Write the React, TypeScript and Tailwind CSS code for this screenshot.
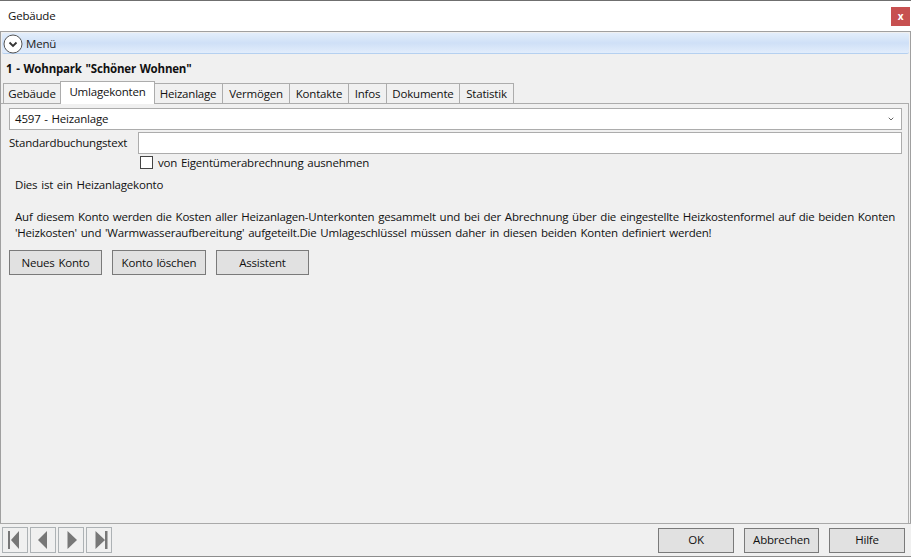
import { ChevronDown } from 'lucide-react';

const tabs = [
  { label: 'Gebäude', width: 'w-[58px]' },
  { label: 'Umlagekonten', width: 'w-[95px]' },
  { label: 'Heizanlage', width: 'w-[69px]' },
  { label: 'Vermögen', width: 'w-[67px]' },
  { label: 'Kontakte', width: 'w-[59px]' },
  { label: 'Infos', width: 'w-[38px]' },
  { label: 'Dokumente', width: 'w-[73px]' },
  { label: 'Statistik', width: 'w-[54px]' },
];

const font = "font-['Open_Sans','Noto_Sans',sans-serif]";

function ActionButton({ label, width }: { label: string; width: string }) {
  return (
    <button className={`${width} h-[25px] bg-[#e1e1e1] border border-[#7a7a7a] text-[11.5px] text-[#111] tracking-[-0.2px] [word-spacing:1px]`}>
      {label}
    </button>
  );
}

function NavButton({ children }: { children: React.ReactNode }) {
  return (
    <button className="w-[26px] h-[26px] border border-[#adb2b5] flex items-center justify-center">
      <svg width="20" height="20" viewBox="0 0 20 20" fill="#777">
        {children}
      </svg>
    </button>
  );
}

export default function App() {
  return (
    <div className={`${font} w-[911px] h-[557px] bg-white flex flex-col border-t border-[#6f6f6f] text-[11.5px] text-[#111] tracking-[-0.2px] [word-spacing:1px] overflow-hidden`}>
      {/* Title bar */}
      <div className="h-[30px] shrink-0 flex items-center justify-between pl-[8px] pr-[1px]">
        <span className="-mt-[1px]">Gebäude</span>
        <div className="w-[19px] h-[19px] bg-[#c75050] text-white text-[10px] font-bold flex items-center justify-center">x</div>
      </div>

      {/* Window body */}
      <div className="flex-1 flex flex-col bg-[#f0f0f0] border-t border-x border-b border-[#a0a0a0] min-h-0">
        <div className="mx-[1px] mt-[1px] h-[21px] shrink-0 flex items-center gap-[3px] pl-[1px] pt-[1px] rounded-[2px] border-b border-[#b5d0f0] bg-gradient-to-b from-[#e3eefb] via-[#cfe0f7] to-[#e2edfc] text-[#222]">
          <svg width="20" height="20" viewBox="0 0 20 20" fill="none">
            <circle cx="10" cy="10" r="9" fill="#fff" stroke="#555" strokeWidth="1" />
            <path d="M6.5 8.5L10 12l3.5-3.5" stroke="#333" strokeWidth="1.8" />
          </svg>
          <span>Menü</span>
        </div>

        <div className="pl-[5px] pt-[4px] h-[26px] shrink-0 font-bold text-[#111] flex items-center">1 - Wohnpark "Schöner Wohnen"</div>

        {/* Tabs */}
        <div className="flex items-end h-[23px] shrink-0 pl-[2px]">
          {tabs.map((tab) =>
            tab.label === 'Umlagekonten' ? (
              <div key={tab.label} className={`${tab.width} h-[23px] -mb-[1px] z-10 bg-white border border-b-0 border-[#acacac] flex items-center justify-center -mx-[1px] pb-[3px]`}>
                {tab.label}
              </div>
            ) : (
              <div key={tab.label} className={`${tab.width} h-[20px] bg-[#f0f0f0] border border-b-0 border-l-0 first:border-l border-[#acacac] flex items-center justify-center`}>
                {tab.label}
              </div>
            )
          )}
        </div>

        {/* Tab panel */}
        <div className="flex-1 min-h-0 border-t border-r border-[#acacac] flex flex-col pl-[8px] pr-[6px] pt-[4px] mr-[1px]">
          <div className="h-[22px] bg-white border border-[#acacac] flex items-center justify-between pl-[5px] pr-[6px]">
            <span>4597 - Heizanlage</span>
            <ChevronDown size={8} strokeWidth={3} color="#666" />
          </div>
          <div className="flex items-center gap-[9px] mt-[2px]">
            <span className="w-[120px]">Standardbuchungstext</span>
            <div className="flex-1 h-[22px] bg-white border border-[#acacac]" />
          </div>
          <div className="flex items-center gap-[5px] ml-[131px] mt-[2px] h-[13px]">
            <div className="w-[13px] h-[13px] bg-white border border-[#444]" />
            <span>von Eigentümerabrechnung ausnehmen</span>
          </div>
          <div className="ml-[6px] mt-[8px] h-[16px] leading-[16px]">Dies ist ein Heizanlagekonto</div>
          <div className="ml-[6px] mt-[16px] leading-[16px] w-[892px]">
            Auf diesem Konto werden die Kosten aller Heizanlagen-Unterkonten gesammelt und bei der Abrechnung über die eingestellte Heizkostenformel auf die beiden Konten 'Heizkosten' und 'Warmwasseraufbereitung' aufgeteilt.Die Umlageschlüssel müssen daher in diesen beiden Konten definiert werden!
          </div>
          <div className="flex gap-[10px] mt-[9px]">
            <ActionButton label="Neues Konto" width="w-[93px]" />
            <ActionButton label="Konto löschen" width="w-[94px]" />
            <ActionButton label="Assistent" width="w-[93px]" />
          </div>
        </div>

        {/* Footer */}
        <div className="h-[34px] shrink-0 -mx-[1px] -mb-[1px] border-t border-[#a9a9a9] flex items-center justify-between pl-[2px] pr-[6px] bg-[#f0f0f0] border-b border-b-[#8c8c8c]">
          <div className="flex gap-[2px]">
            <NavButton>
              <path d="M3 1h2v18H3zM14 1v18L6 10z" />
            </NavButton>
            <NavButton>
              <path d="M14 1v18L5 10z" />
            </NavButton>
            <NavButton>
              <path d="M6.5 1v18l9.5-9z" />
            </NavButton>
            <NavButton>
              <path d="M16 1h2.500v18H16zM6.500 1v18l9.500-9z" />
            </NavButton>
          </div>
          <div className="flex gap-[10px]">
            <ActionButton label="OK" width="w-[76px]" />
            <ActionButton label="Abbrechen" width="w-[75px]" />
            <ActionButton label="Hilfe" width="w-[76px]" />
          </div>
        </div>
      </div>
    </div>
  );
}
